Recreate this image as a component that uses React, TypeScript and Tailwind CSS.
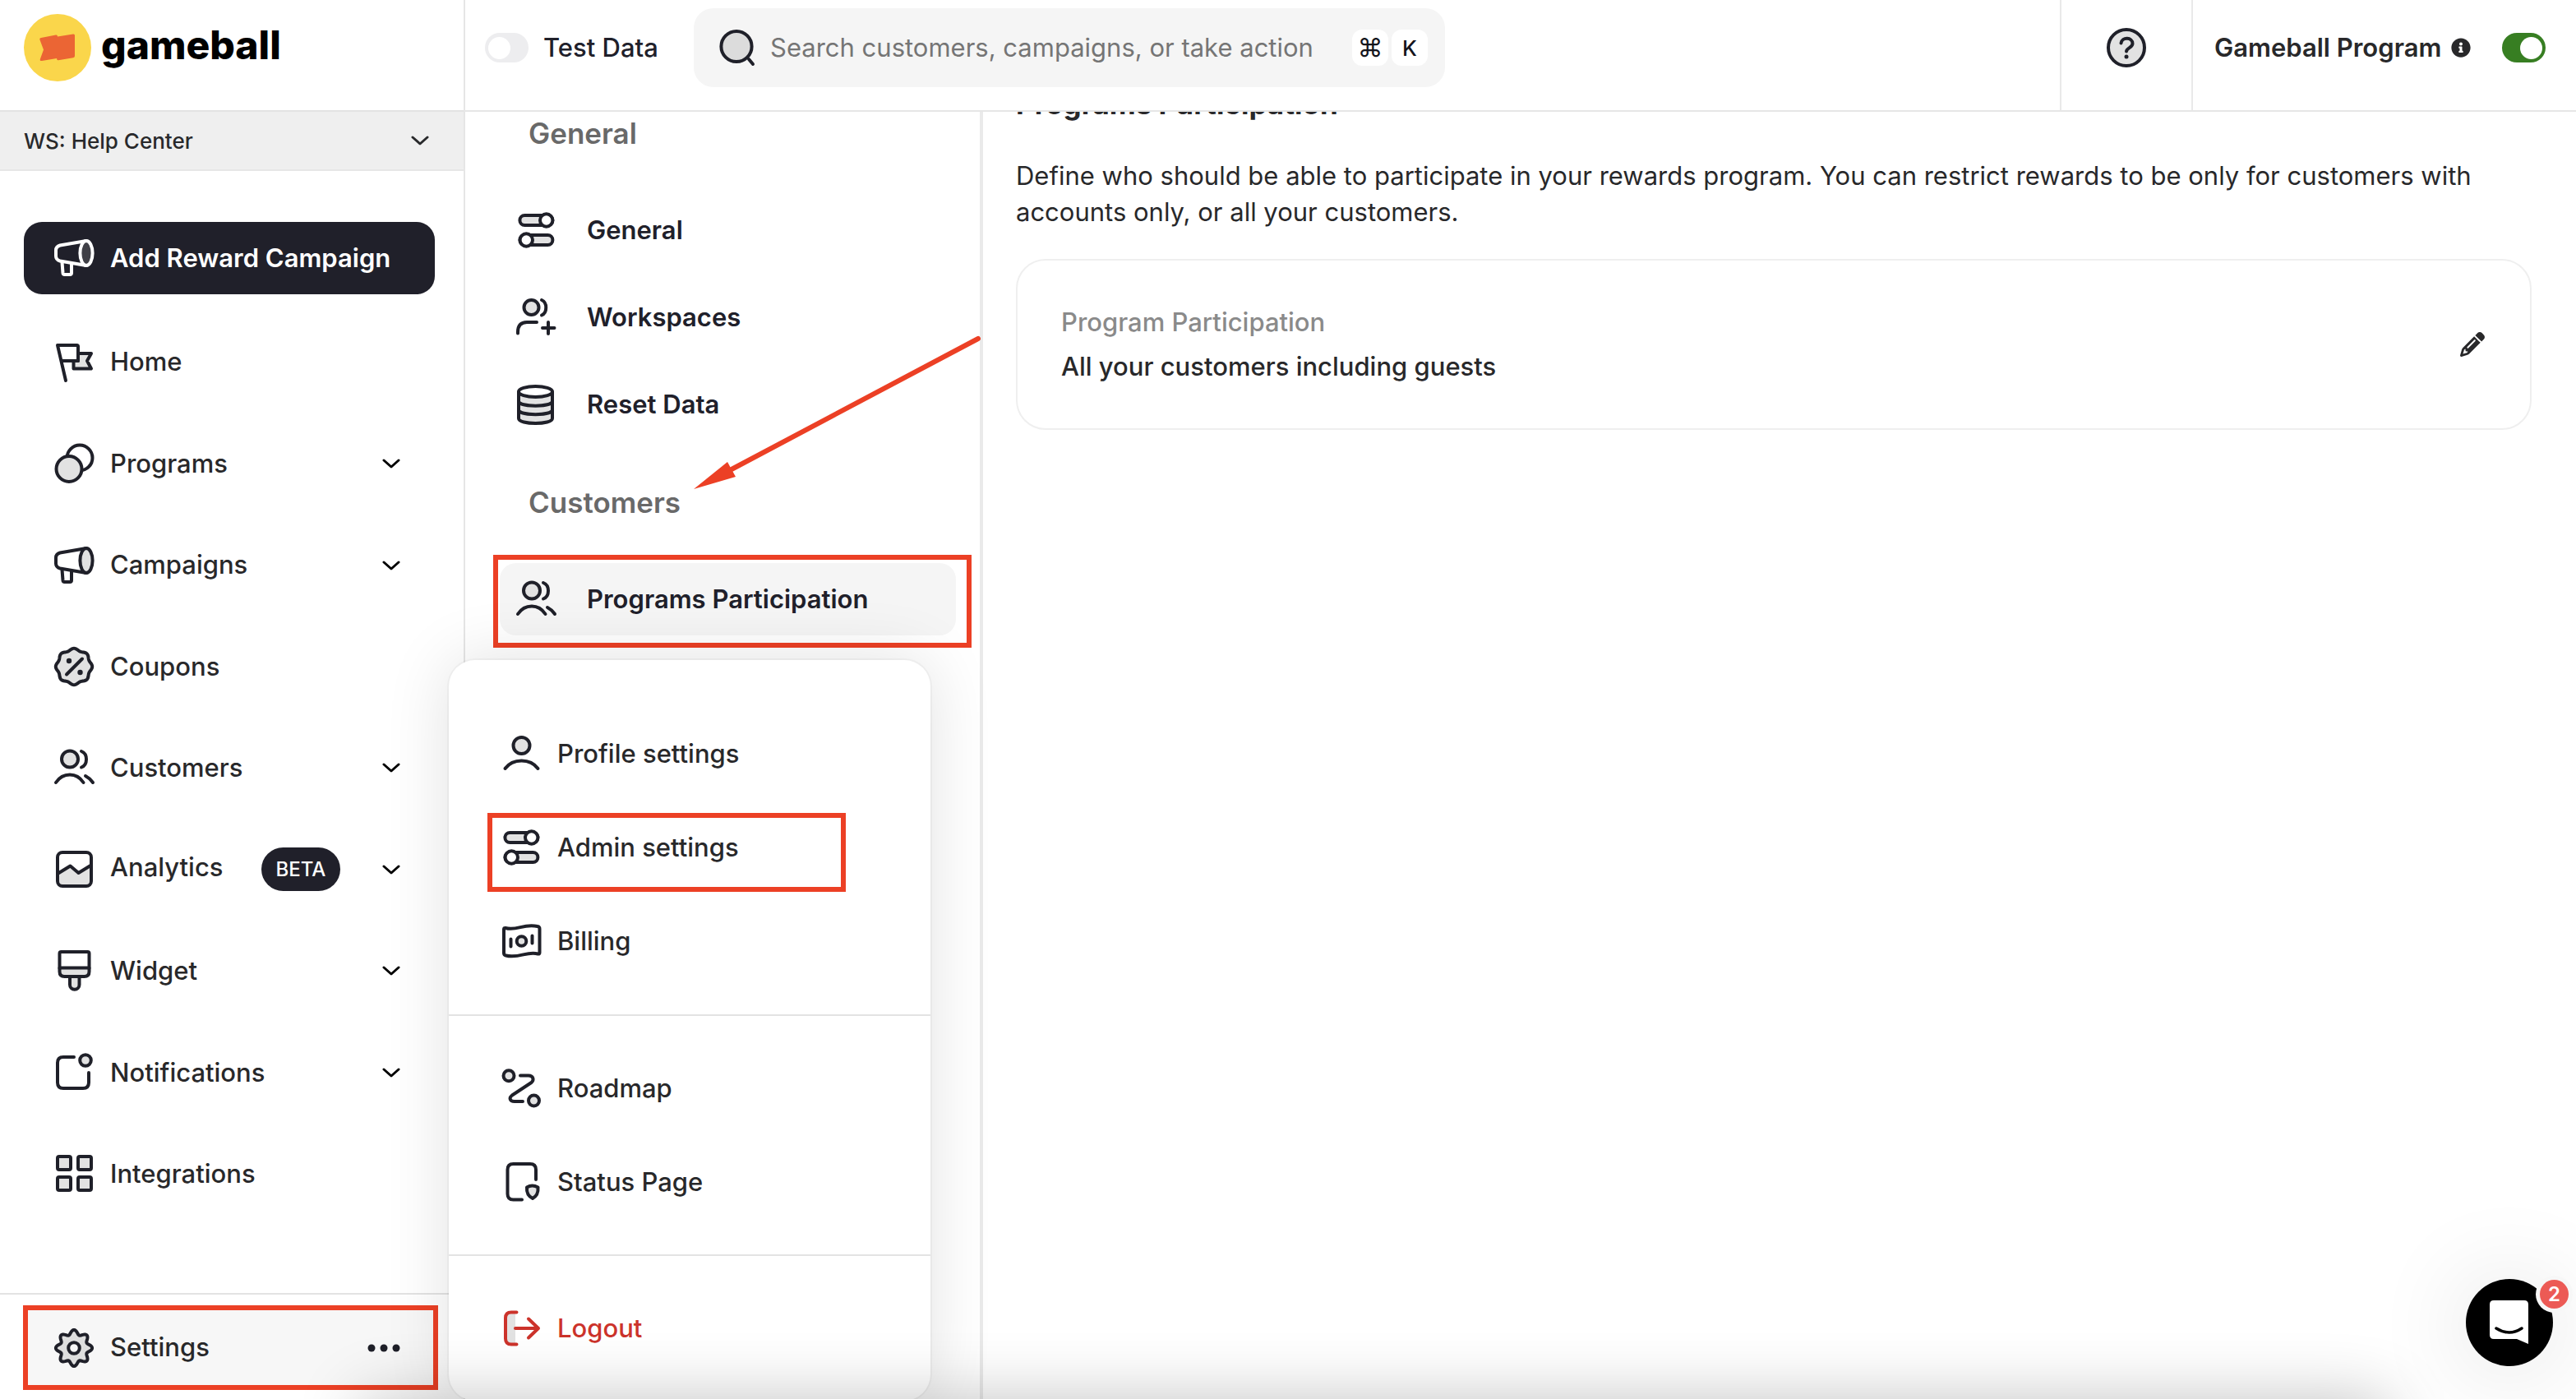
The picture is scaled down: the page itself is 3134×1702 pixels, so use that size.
import { useState, type ReactNode } from "react";
import { FaInfoCircle } from "react-icons/fa";
import { FaPencil } from "react-icons/fa6";

const INK = "#1f2029";
const TINT = "#e2e2e2";

// Closed wavy outline around (24, 24), used by the coupon badge and the gear
function wavyPath(radius: number, depth: number, waves = 8) {
  const points: string[] = [];
  for (let i = 0; i < 160; i++) {
    const angle = (i / 160) * Math.PI * 2;
    const r = radius + depth * Math.cos(waves * angle);
    points.push(`${(24 + r * Math.cos(angle)).toFixed(2)} ${(24 + r * Math.sin(angle)).toFixed(2)}`);
  }
  return `M${points.join("L")}Z`;
}

function Icon({ children, color = INK }: { children: ReactNode; color?: string }) {
  return (
    <svg
      viewBox="0 0 48 48"
      className="size-12 shrink-0 overflow-visible"
      fill="none"
      stroke={color}
      strokeWidth={4}
      strokeLinecap="round"
      strokeLinejoin="round"
      aria-hidden="true"
    >
      {children}
    </svg>
  );
}

const HomeIcon = () => (
  <Icon>
    <path d="M29 13h16l-5 9 5 9.500H23.500V22H29z" fill={TINT} />
    <path d="M14 46 4 3h23.500q1.500 0 1.500 1.500V22H8.500" />
  </Icon>
);

const ProgramsIcon = () => (
  <Icon>
    <circle cx="31" cy="17" r="15.500" />
    <circle cx="18" cy="30.500" r="15.500" fill="#fff" stroke="none" />
    <circle cx="18" cy="30.500" r="15.500" fill={TINT} />
  </Icon>
);

const MegaphoneIcon = ({ color = INK, tint = TINT }: { color?: string; tint?: string }) => (
  <Icon color={color}>
    <path d="M39 3 7 8.500Q2 10 2 14.500v7Q2 26 7 27.500L39 33" />
    <ellipse cx="39" cy="18" rx="7.600" ry="15" fill={tint} />
    <path d="m9.500 29 1 13q.2 2 2 2H19q2 0 2-2V31" />
  </Icon>
);

const CouponIcon = () => (
  <Icon>
    <path d={wavyPath(21, 1.2)} fill={TINT} />
    <path d="M34 14.500 15 33.500" />
    <circle cx="18" cy="17" r="3.200" fill={INK} stroke="none" />
    <circle cx="31.500" cy="31" r="3.200" fill={INK} stroke="none" />
  </Icon>
);

const PeopleIcon = () => (
  <Icon>
    <circle cx="19" cy="13.500" r="10" fill={TINT} />
    <path d="M33 4c8 3 8 16.500 0 19.500M2 42c4-6 10-9.500 17-9.500S31.500 36 35.500 42M38 34c3.500 1.800 6.500 4.500 9 8" />
  </Icon>
);

const AnalyticsIcon = () => (
  <Icon>
    <path d="m4 29 15.500-9.500L29.500 28 45 18.500V38q0 6-6 6H10q-6 0-6-6z" fill={TINT} stroke="none" />
    <rect x="4" y="3" width="41" height="41" rx="6" />
    <path d="m4 29 15.500-9.500L29.500 28 45 18.500" />
  </Icon>
);

const WidgetIcon = () => (
  <Icon>
    <path d="M19 30v11a5.700 5.700 0 0 0 11.500 0V30" fill={TINT} />
    <path d="M6.500 20.500h36V25q0 6-6 6h-24q-6 0-6-6z" fill={TINT} />
    <path d="M6.500 21V3q0-2 2-2h32q2 0 2 2v18" />
  </Icon>
);

const NotificationsIcon = () => (
  <Icon>
    <path d="M24 5H11q-7 0-7 7v24q0 7 7 7h24q7 0 7-7V24" />
    <circle cx="38" cy="9" r="6.800" fill={TINT} />
  </Icon>
);

const IntegrationsIcon = () => (
  <Icon>
    <rect x="4" y="3" width="16" height="16" rx="2" fill={TINT} />
    <rect x="29" y="3" width="16" height="16" rx="2" fill={TINT} />
    <rect x="4" y="28" width="16" height="16" rx="2" fill={TINT} />
    <rect x="29" y="28" width="16" height="16" rx="2" fill={TINT} />
  </Icon>
);

const GearIcon = () => (
  <Icon>
    <path d={wavyPath(19.4, 2.7)} fill="#dedede" />
    <circle cx="24" cy="24" r="6.800" fill="#f7f7f7" />
  </Icon>
);

const SlidersIcon = () => (
  <Icon>
    <rect x="4.400" y="6" width="40" height="12" rx="6" fill={TINT} />
    <circle cx="36.700" cy="12" r="7.700" fill="#fff" />
    <rect x="4.400" y="30" width="40" height="12" rx="6" fill={TINT} />
    <circle cx="12.300" cy="36" r="7.700" fill="#fff" />
  </Icon>
);

const WorkspacesIcon = () => (
  <Icon>
    <circle cx="18.500" cy="12" r="9" fill={TINT} />
    <path d="M31 3c7 3 7 15.500 0 18.500M2 43.500V42c0-8 4-12 11-12h12M39 30v14M32 37h14.500" />
  </Icon>
);

const DatabaseIcon = () => (
  <Icon>
    <path d="M3 9v32c0 8 41 8 41 0V9" fill={TINT} />
    <ellipse cx="23.500" cy="8.500" rx="20.500" ry="6.500" fill="#fff" />
    <path d="M3 20c0 7.500 41 7.500 41 0M3 30.500c0 7.500 41 7.500 41 0" />
  </Icon>
);

const ProfileIcon = () => (
  <Icon>
    <circle cx="24.500" cy="14" r="10" fill={TINT} />
    <path d="M4.500 42c4.500-6 12-9.500 20-9.500s15.500 3.500 20 9.500" />
  </Icon>
);

const BillingIcon = () => (
  <Icon>
    <path d="M3 9.500q0-2 2-1.500c14 4 22-6 39-2q2.500.5 2.500 3v29q0 2-2 1.500c-13-4-23 6-39 2Q3 41 3 38.500z" />
    <circle cx="24.500" cy="24" r="5.800" fill={TINT} />
    <path d="M11.500 21.500v9M37.500 17.500v9" />
  </Icon>
);

const RoadmapIcon = () => (
  <Icon>
    <circle cx="9" cy="8.700" r="6.500" fill={TINT} />
    <circle cx="39.500" cy="39" r="6.500" fill={TINT} />
    <path d="M23 8.500h10c6 0 7 5.500 3.500 8.500L13 32.500C9 35.500 10 40 16 40h10" />
  </Icon>
);

const StatusIcon = () => (
  <Icon>
    <path d="M42 21V9q0-7-7-7H14.500q-7 0-7 7v29.500q0 7 7 7H25" />
    <path d="M31 30.500q6.500-4 13.500 0c.5 6-1 10.500-6.500 13.500-6-3-7.500-7.500-7-13.500z" fill={TINT} />
  </Icon>
);

const LogoutIcon = () => (
  <Icon color="#cc332b">
    <path d="M17 4.500h-5q-7 0-7 7v25q0 7 7 7h5z" fill={TINT} stroke="none" />
    <path d="M18.500 4.500H12q-7 0-7 7v25q0 7 7 7h6.500M17 24h28M33 12.500 45 24 33 35.500" />
  </Icon>
);

const SearchIcon = () => (
  <Icon>
    <circle cx="23" cy="22.500" r="18.600" fill="#dcdcdc" />
    <path d="m38 38 5 6" />
  </Icon>
);

const HelpIcon = () => (
  <Icon>
    <circle cx="24" cy="24" r="22" fill={TINT} />
    <path d="M17.500 18.500c1-8 14-7.500 14 .5 0 5-7 5-7.500 9.500" />
    <circle cx="24" cy="35" r="2.500" fill={INK} stroke="none" />
  </Icon>
);

const Chevron = () => (
  <svg viewBox="0 0 22 12" className="h-3 w-[22px] shrink-0" fill="none" stroke="currentColor" strokeWidth={3} strokeLinecap="round" strokeLinejoin="round" aria-hidden="true">
    <path d="m2 2 9 8 9-8" />
  </svg>
);

const NAV_ITEMS = [
  { label: "Home", icon: HomeIcon },
  { label: "Programs", icon: ProgramsIcon, expandable: true },
  { label: "Campaigns", icon: MegaphoneIcon, expandable: true },
  { label: "Coupons", icon: CouponIcon },
  { label: "Customers", icon: PeopleIcon, expandable: true },
  { label: "Analytics", icon: AnalyticsIcon, expandable: true, badge: "BETA" },
  { label: "Widget", icon: WidgetIcon, expandable: true },
  { label: "Notifications", icon: NotificationsIcon, expandable: true },
  { label: "Integrations", icon: IntegrationsIcon },
];

const SETTINGS_GROUPS = [
  {
    title: "General",
    items: [
      { label: "General", icon: SlidersIcon },
      { label: "Workspaces", icon: WorkspacesIcon },
      { label: "Reset Data", icon: DatabaseIcon },
    ],
  },
  {
    title: "Customers",
    items: [{ label: "Programs Participation", icon: PeopleIcon, active: true }],
  },
];

function Toggle({ checked, onChange, id }: { checked: boolean; onChange: (value: boolean) => void; id: string }) {
  return (
    <input
      id={id}
      type="checkbox"
      role="switch"
      checked={checked}
      onChange={(e) => onChange(e.target.checked)}
      className="flex h-9 w-[53px] shrink-0 cursor-pointer appearance-none items-center rounded-full bg-[#ededef] px-1 before:size-[27px] before:rounded-full before:bg-white checked:justify-end checked:bg-[#377e22]"
    />
  );
}

function Sidebar() {
  return (
    <aside className="flex w-[566px] shrink-0 flex-col border-r-2 border-[#e6e6e6]">
      <div className="flex h-[136px] shrink-0 items-start gap-3 border-b-2 border-[#e3e3e3] pt-[17px] pl-[29px]">
        <svg viewBox="0 0 82 82" className="size-[82px]" aria-hidden="true">
          <circle cx="41" cy="41" r="41" fill="#fad64b" />
          <path
            d="m21 29 18-3.500q2-.3 2 2l19-3q2-.3 2 1.500v25q0 2-2 2.300l-18 3q-2 .3-2-2.300l-18 3q-3 .5-2-2.500l4-11-4.500-12q-.8-2 1.500-2.500z"
            fill="#eb6534"
          />
        </svg>
        <span className="text-[48px] leading-[76px] font-extrabold text-black">gameball</span>
      </div>

      <button className="flex h-[72px] shrink-0 items-center justify-between border-b-2 border-[#e6e6e6] bg-[#efefef] pr-[42px] pl-[29px] text-[26px] font-medium text-[#28292b]">
        WS: Help Center
        <Chevron />
      </button>

      <div className="px-[29px] pt-[62px]">
        <button className="flex h-[88px] w-[500px] items-center gap-5 rounded-[22px] bg-[#20202a] pl-[37px] text-[31px] font-semibold text-white">
          <MegaphoneIcon color="#fff" tint="#404047" />
          Add Reward Campaign
        </button>
      </div>

      <nav className="mt-[21px] mb-[83px] flex flex-1 flex-col">
        {NAV_ITEMS.map(({ label, icon: NavIcon, expandable, badge }) => (
          <a key={label} href="#" className="flex flex-1 items-center gap-5 pr-[77px] pl-[66px] text-[31px] font-medium text-[#28282a]">
            <NavIcon />
            <span className="flex flex-1 items-baseline gap-[46px]">
              {label}
              {badge && (
                <span className="rounded-full bg-[#20202a] px-[18px] text-[24px] leading-[53px] font-medium text-white">{badge}</span>
              )}
            </span>
            {expandable && (
              <span className="text-black">
                <Chevron />
              </span>
            )}
          </a>
        ))}
      </nav>

      <div className="border-t-2 border-[#e3e3e3] px-7 pt-[13px] pb-[11px]">
        <button className="flex h-[103px] w-[505px] items-center gap-5 border-6 border-[#ec4025] bg-[#f7f7f7] pr-10 pl-8 text-[31px] font-medium text-[#28282a]">
          <GearIcon />
          <span className="flex-1 text-left">Settings</span>
          <svg viewBox="0 0 40 10" className="h-[10px] w-10" fill={INK} aria-hidden="true">
            <circle cx="5" cy="5" r="4.500" />
            <circle cx="20" cy="5" r="4.500" />
            <circle cx="35" cy="5" r="4.500" />
          </svg>
        </button>
      </div>
    </aside>
  );
}

function Header() {
  const [testData, setTestData] = useState(false);
  const [programOn, setProgramOn] = useState(true);

  return (
    <header className="z-10 flex h-[136px] shrink-0 border-b-2 border-[#e6e6e6] bg-white">
      <div className="flex h-[116px] flex-1 items-center pl-6">
        <Toggle id="test-data" checked={testData} onChange={setTestData} />
        <label htmlFor="test-data" className="ml-[18px] w-[183px] text-[31px] font-medium whitespace-nowrap text-[#20202a]">
          Test Data
        </label>
        <div className="flex h-24 w-[914px] items-center rounded-3xl bg-[#f5f5f5] pr-[21px] pl-[29px]">
          <SearchIcon />
          <input
            type="search"
            aria-label="Search"
            placeholder="Search customers, campaigns, or take action"
            className="ml-4 min-w-0 flex-1 bg-transparent text-[31px] outline-none placeholder:text-[#757575]"
          />
          <div className="flex gap-1 text-[#14141c]">
            <kbd className="flex size-11 items-center justify-center rounded-xl bg-white font-[Inter] text-[31px]">⌘</kbd>
            <kbd className="flex size-11 items-center justify-center rounded-xl bg-white font-[Inter] text-[26px] font-medium">K</kbd>
          </div>
        </div>
      </div>
      <div className="flex w-[160px] justify-center border-l-2 border-[#e9e9e9] pt-[34px]">
        <button className="size-12" aria-label="Help">
          <HelpIcon />
        </button>
      </div>
      <div className="flex w-[468px] border-l-2 border-[#e9e9e9]">
        <div className="flex h-[116px] flex-1 items-center pl-[26px]">
          <label htmlFor="program" className="text-[31px] font-semibold whitespace-nowrap text-[#28282a]">
            Gameball Program
          </label>
          <FaInfoCircle className="ml-3 size-6 text-[#28282a]" />
          <span className="mr-[37px] ml-auto flex">
            <Toggle id="program" checked={programOn} onChange={setProgramOn} />
          </span>
        </div>
      </div>
    </header>
  );
}

function SettingsNav() {
  return (
    <nav className="w-[630px] shrink-0 border-r-4 border-[#eaeaea] pt-1 pl-[42px]">
      {SETTINGS_GROUPS.map((group) => (
        <section key={group.title} className="mb-[53px]">
          <h2 className="mb-[52px] pl-[35px] text-[35px] leading-[44px] font-semibold text-[#696969]">{group.title}</h2>
          <ul className="flex flex-col gap-[18px]">
            {group.items.map(({ label, icon: ItemIcon, ...item }) => {
              const active = "active" in item;
              return (
                <li key={label} className={active ? "-mx-2 -my-[10px] w-[582px] border-6 border-[#ec4025] px-[2px] pt-1 pb-[9px]" : "w-[555px]"}>
                  <a
                    href="#"
                    className={
                      "flex h-[88px] w-[555px] items-center gap-[38px] rounded-[20px] pl-5 text-[31px] font-semibold text-[#20202a] " +
                      (active ? "bg-[#f5f5f5]" : "")
                    }
                  >
                    <ItemIcon />
                    {label}
                  </a>
                </li>
              );
            })}
          </ul>
        </section>
      ))}
    </nav>
  );
}

function MenuItem({ icon: ItemIcon, label, danger }: { icon: () => ReactNode; label: string; danger?: boolean }) {
  return (
    <button
      role="menuitem"
      className={
        "flex h-[114px] w-full items-center gap-5 pl-16 text-[31px] font-medium " +
        (danger ? "text-[#cc332b]" : "text-[#28282a]")
      }
    >
      <ItemIcon />
      {label}
    </button>
  );
}

function SettingsMenu() {
  return (
    <div
      role="menu"
      className="absolute top-[803px] left-[546px] z-20 w-[586px] rounded-[32px] bg-white shadow-[0_0_0_2px_rgba(0,0,0,0.03),0_0_80px_rgba(0,0,0,0.12)]"
    >
      <div className="relative border-b-2 border-[#e3e3e3] pt-[57px] pb-8">
        <MenuItem icon={ProfileIcon} label="Profile settings" />
        <MenuItem icon={SlidersIcon} label="Admin settings" />
        <MenuItem icon={BillingIcon} label="Billing" />
        <div className="pointer-events-none absolute top-[186px] left-[47px] h-24 w-[436px] border-6 border-[#ec4025]" />
      </div>
      <div className="border-b-2 border-[#e3e3e3] py-[31px]">
        <MenuItem icon={RoadmapIcon} label="Roadmap" />
        <MenuItem icon={StatusIcon} label="Status Page" />
      </div>
      <div className="py-[31px]">
        <MenuItem icon={LogoutIcon} label="Logout" danger />
      </div>
    </div>
  );
}

function Launcher() {
  return (
    <button
      aria-label="Open messenger, 2 unread"
      className="absolute right-7 bottom-10 z-40 size-[106px] rounded-full bg-black shadow-[0_4px_120px_rgba(0,0,0,0.14)]"
    >
      <svg viewBox="0 0 106 106" className="size-full" aria-hidden="true">
        <path d="M34 26h37q5 0 5 5v48l-14-6H34q-5 0-5-5V31q0-5 5-5z" fill="#fff" />
        <path d="M37 60q16 10 31 0" fill="none" stroke="#000" strokeWidth="3.500" strokeLinecap="round" />
      </svg>
      <span className="absolute -top-1 -right-6 flex size-[45px] items-center justify-center rounded-full bg-[#f7f7f7]">
        <span className="flex size-[35px] items-center justify-center rounded-full bg-[#ec5a55] text-[24px] font-semibold text-white">2</span>
      </span>
    </button>
  );
}

export default function App() {
  return (
    <div className="relative flex h-screen overflow-hidden bg-white font-[Inter,sans-serif] text-[#28282a]">
      <Sidebar />
      <div className="flex min-w-0 flex-1 flex-col">
        <Header />
        <div className="flex min-h-0 flex-1">
          <SettingsNav />
          <main className="min-w-0 flex-1 pr-[54px] pl-10">
            <h1 className="-mt-8 text-[35px] leading-[44px] font-bold">Programs Participation</h1>
            <p className="mt-11 text-[31px] leading-[44px]">
              Define who should be able to participate in your rewards program. You can restrict rewards to be only for
              customers with accounts only, or all your customers.
            </p>
            <section className="mt-[35px] flex h-[208px] items-center justify-between rounded-[36px] border-2 border-[#efefef] pr-[55px] pl-[53px]">
              <div className="text-[31px] leading-[54px]">
                <h2 className="font-medium text-[#8a8a8a]">Program Participation</h2>
                <p className="font-medium">All your customers including guests</p>
              </div>
              <button aria-label="Edit program participation">
                <FaPencil className="size-[30px] text-[#28282a]" />
              </button>
            </section>
          </main>
        </div>
      </div>

      <SettingsMenu />

      {/* Arrow pointing at the Customers group */}
      <svg className="pointer-events-none absolute top-[400px] left-[840px] z-30 h-[200px] w-[360px]" viewBox="0 0 360 200" aria-hidden="true">
        <path d="M350 12 50 171" stroke="#ec4025" strokeWidth="6" strokeLinecap="round" />
        <path d="m4 195 41-33 10 18z" fill="#ec4025" />
      </svg>

      {/* Soft shade rising from the bottom edge */}
      <div className="pointer-events-none absolute right-[230px] -bottom-40 left-[440px] z-30 h-40 shadow-[0_0_80px_rgba(0,0,0,0.24)]" />
      <Launcher />
    </div>
  );
}
